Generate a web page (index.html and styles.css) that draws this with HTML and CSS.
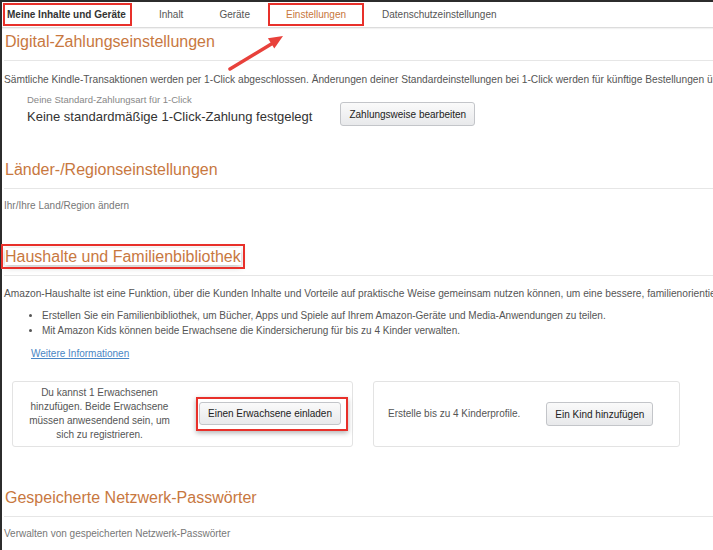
FILE: index.html
```html
<!DOCTYPE html>
<html lang="de">
<head>
    <meta charset="UTF-8">
    <meta name="viewport" content="width=device-width, initial-scale=1.0">
    <title>Einstellungen</title>
    <link rel="stylesheet" href="styles.css">
</head>
<body>

<div class="page">
    <nav class="tabs">
        <a class="tab tab-main marked">Meine Inhalte und Geräte</a>
        <a class="tab">Inhalt</a>
        <a class="tab">Geräte</a>
        <a class="tab tab-active marked">Einstellungen</a>
        <a class="tab">Datenschutzeinstellungen</a>
    </nav>

    <div class="content">
        <h2 class="section-title first">Digital-Zahlungseinstellungen</h2>
        <p class="text wide">Sämtliche Kindle-Transaktionen werden per 1-Click abgeschlossen. Änderungen deiner Standardeinstellungen bei 1-Click werden für künftige Bestellungen über Kindle übernommen.</p>
        <div class="payment">
            <div class="payment-info">
                <div class="payment-label">Deine Standard-Zahlungsart für 1-Click</div>
                <div class="payment-value">Keine standardmäßige 1-Click-Zahlung festgelegt</div>
            </div>
            <button class="btn btn-payment">Zahlungsweise bearbeiten</button>
        </div>

        <h2 class="section-title">Länder-/Regionseinstellungen</h2>
        <p class="text small">Ihr/Ihre Land/Region ändern</p>

        <h2 class="section-title"><span class="marked-title">Haushalte und Familienbibliothek</span></h2>
        <p class="text wide household-intro">Amazon-Haushalte ist eine Funktion, über die Kunden Inhalte und Vorteile auf praktische Weise gemeinsam nutzen können, um eine bessere, familienorientierte Erfahrung zu erhalten.</p>
        <ul class="features">
            <li>Erstellen Sie ein Familienbibliothek, um Bücher, Apps und Spiele auf Ihrem Amazon-Geräte und Media-Anwendungen zu teilen.</li>
            <li>Mit Amazon Kids können beide Erwachsene die Kindersicherung für bis zu 4 Kinder verwalten.</li>
        </ul>
        <a class="more-link" href="#">Weitere Informationen</a>

        <div class="cards">
            <div class="card card-adult">
                <p class="card-text centered">Du kannst 1 Erwachsenen hinzufügen. Beide Erwachsene müssen anwesendend sein, um sich zu registrieren.</p>
                <div class="marked-btn">
                    <button class="btn">Einen Erwachsene einladen</button>
                </div>
            </div>
            <div class="card card-kid">
                <p class="card-text">Erstelle bis zu 4 Kinderprofile.</p>
                <button class="btn">Ein Kind hinzufügen</button>
            </div>
        </div>

        <h2 class="section-title last">Gespeicherte Netzwerk-Passwörter</h2>
        <p class="text small">Verwalten von gespeicherten Netzwerk-Passwörter</p>
    </div>
</div>

<svg class="arrow" width="713" height="100" viewBox="0 0 713 100">
    <line x1="230" y1="69" x2="273" y2="43" stroke="#e8413b" stroke-width="3.5" stroke-linecap="round"/>
    <polygon points="283,36 274.3,48.5 267.9,38.3" fill="#e8413b"/>
</svg>

</body>
</html>
```

FILE: styles.css
```css
body {
    margin: 0;
    position: relative;
    overflow: hidden;
    background-color: #fff;
    font-family: "Liberation Sans", Arial, sans-serif;
    color: #555;
}

.page {
    min-height: 548px;
    border-left: 2px solid #2c2c2c;
    border-top: 2px solid #2c2c2c;
}

/* top navigation */

.tabs {
    display: flex;
    height: 25px;
    border-bottom: 1px solid #dcdcdc;
    box-shadow: 0 1px 1px rgba(0, 0, 0, 0.05);
}

.tab {
    display: flex;
    align-items: center;
    box-sizing: border-box;
    height: 23px;
    margin-top: 1px;
    padding: 0 16px;
    border: 2px solid transparent;
    font-size: 10px;
    color: #555;
    white-space: nowrap;
}

.tab-main {
    margin-left: 1px;
    margin-right: 9px;
    padding: 0 4px 0 2px;
    font-weight: bold;
    color: #333;
}

.tab-active {
    color: #c7773c;
}

.marked {
    border-color: #e8302a;
}

/* content */

.content {
    padding-left: 2px;
}

.section-title {
    margin: 35px 0 0;
    padding: 0 0 8px 1px;
    font-size: 16px;
    line-height: 20px;
    font-weight: normal;
    color: #c8783f;
    border-bottom: 1px solid #e6e6e6;
}

.section-title.first {
    margin-top: 4px;
}

.section-title.last {
    margin-top: 41px;
}

.marked-title {
    outline: 2px solid #e8302a;
    outline-offset: 2px;
    box-shadow: 0 2px 6px rgba(0, 0, 0, 0.25);
}

.text {
    margin: 12px 0 0;
    font-size: 10.2px;
    line-height: 14px;
}

.text.wide {
    white-space: nowrap;
}

.text.small {
    margin-top: 11px;
    font-size: 10px;
    line-height: 12px;
    color: #777;
}

.payment {
    display: flex;
    align-items: flex-end;
    margin-top: 7px;
    padding-left: 23px;
}

.payment-label {
    font-size: 9.5px;
    line-height: 12px;
    color: #888;
}

.payment-value {
    margin-top: 3px;
    font-size: 13px;
    line-height: 16px;
    color: #333;
}

.btn-payment {
    margin-left: 28px;
    margin-bottom: -1px;
}

.btn {
    height: 24px;
    padding: 0 8px;
    font-family: inherit;
    font-size: 10px;
    color: #222;
    background: linear-gradient(#fafafa, #e8e9eb);
    border: 1px solid #c3c5c9;
    border-radius: 3px;
    white-space: nowrap;
}

.household-intro {
    margin-top: 11px;
}

.features {
    margin: 7px 0 0;
    padding-left: 38px;
    font-size: 10px;
    line-height: 15px;
    color: #555;
}

.more-link {
    display: block;
    margin-top: 9px;
    margin-left: 27px;
    width: max-content;
    font-size: 10px;
    line-height: 14px;
    color: #4a86c5;
}

/* household cards */

.cards {
    display: flex;
    gap: 20px;
    margin: 20px 0 0 8px;
}

.card {
    display: flex;
    align-items: center;
    box-sizing: border-box;
    height: 66px;
    padding: 4px;
    border: 1px solid #e3e3e3;
    border-radius: 3px;
}

.card-adult {
    width: 341px;
    padding-left: 16px;
}

.card-kid {
    width: 307px;
    padding-left: 14px;
}

.card-text {
    margin: 0;
    font-size: 10px;
    line-height: 14px;
    color: #555;
}

.card-text.centered {
    width: 144px;
    text-align: center;
}

.card-kid .card-text {
    margin-right: 26px;
}

.marked-btn {
    margin-left: 26px;
    padding: 3px 5px 4px 1px;
    border: 2px solid #e8302a;
    box-shadow: 0 2px 5px rgba(0, 0, 0, 0.3);
}

.marked-btn .btn {
    display: block;
    height: 23px;
}

.arrow {
    position: absolute;
    top: 0;
    left: 0;
    pointer-events: none;
}
```
